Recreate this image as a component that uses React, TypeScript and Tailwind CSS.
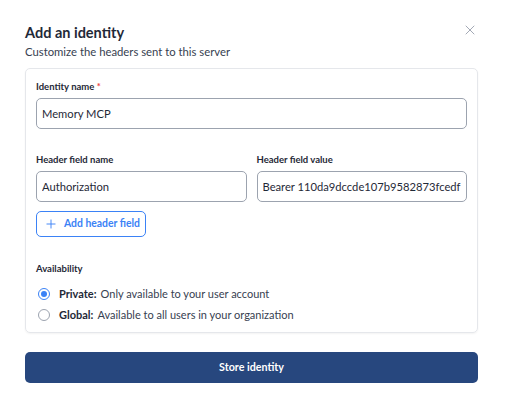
import { X, Plus } from "lucide-react"

const Radio = ({ checked }: { checked: boolean }) => (
  <span
    className={
      checked
        ? "flex h-[12px] w-[12px] items-center justify-center rounded-full border-[1.5px] border-[#3b82f6]"
        : "flex h-[12px] w-[12px] items-center justify-center rounded-full border-[1.5px] border-[#9ca3af]"
    }
  >
    {checked && <span className="h-[6px] w-[6px] rounded-full bg-[#3b82f6]" />}
  </span>
)

const App = () => {
  return (
    <div className="h-[417px] w-[511px] bg-white pl-[25px] pr-[33px] pt-[23px] text-[#1f2937] font-['Lato','Noto_Sans',sans-serif]">
      <div className="flex flex-row items-start justify-between">
        <div>
          <h1 className="text-[14.5px] leading-[20px] font-bold text-[#1f2937]">Add an identity</h1>
          <p className="mt-[1px] text-[11.3px] leading-[15px] text-[#374151]">Customize the headers sent to this server</p>
        </div>
        <button className="mt-[-1px] mr-[0px] text-[#9ca3af]">
          <X size={16} strokeWidth={1.4} />
        </button>
      </div>

      <div className="mt-[9px] rounded-[5px] border border-[#e5e7eb] px-[10px] pt-[10px] pb-[9px] shadow-[0_1px_2px_rgba(0,0,0,0.05)]">
        <label className="block text-[9.5px] leading-[16px] font-bold text-[#1f2937]">
          Identity name <span className="text-[#ef4444]">*</span>
        </label>
        <input
          className="mt-[3px] h-[31px] w-full rounded-[5px] border border-[#9ca3af] px-[5px] text-[11.2px] text-[#1f2937] outline-none"
          defaultValue="Memory MCP"
        />

        <div className="mt-[23px] grid grid-cols-2 gap-x-[10px]">
          <div>
            <label className="block text-[9.5px] leading-[16px] font-bold">Header field name</label>
            <input
              className="mt-[3px] h-[31px] w-full rounded-[5px] border border-[#9ca3af] px-[5px] text-[11.2px] text-[#1f2937] outline-none"
              defaultValue="Authorization"
            />
          </div>
          <div>
            <label className="block text-[9.5px] leading-[16px] font-bold">Header field value</label>
            <input
              className="mt-[3px] h-[31px] w-full rounded-[5px] border border-[#9ca3af] px-[5px] text-[11.2px] text-[#1f2937] outline-none"
              defaultValue="Bearer 110da9dccde107b9582873fcedf"
            />
          </div>
        </div>

        <button className="mt-[9px] flex h-[26px] items-center gap-[6px] rounded-[5px] border border-[#3b82f6] pl-[7px] pr-[5px] text-[10.4px] font-bold text-[#3b82f6]">
          <Plus size={14} strokeWidth={1.6} />
          Add header field
        </button>

        <p className="mt-[24px] text-[9.5px] leading-[16px] font-bold">Availability</p>
        <div className="mt-[9px] flex flex-col gap-[5px] pl-[2px]">
          <label className="flex h-[16px] items-center gap-[9px] text-[11px]">
            <Radio checked />
            <span>
              <span className="mr-[4px] font-bold">Private:</span>
              <span className="text-[#374151]">Only available to your user account</span>
            </span>
          </label>
          <label className="flex h-[16px] items-center gap-[9px] text-[11px]">
            <Radio checked={false} />
            <span>
              <span className="mr-[4px] font-bold">Global:</span>
              <span className="text-[#374151]">Available to all users in your organization</span>
            </span>
          </label>
        </div>
      </div>

      <button className="mt-[19px] h-[31px] w-full rounded-[5px] bg-[#27477e] text-[10.7px] font-bold text-white">
        Store identity
      </button>
    </div>
  )
}

export default App
